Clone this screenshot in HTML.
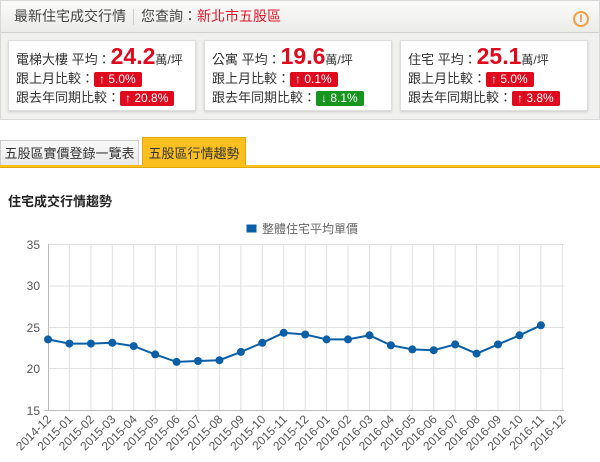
<!DOCTYPE html>
<html><head><meta charset="utf-8"><style>
*{box-sizing:border-box;margin:0;padding:0}
body{width:600px;height:462px;background:#fff;font-family:"Liberation Sans","Noto Sans CJK TC",sans-serif;position:relative;overflow:hidden;color:#333}
.top{position:absolute;left:0;top:0;width:600px;height:120px;border:1px solid #d8d8d8;background:#f0f0ee}
.hdr{height:32px;border-bottom:1px solid #d0d0d0;background:linear-gradient(#fbfbfa,#ebebe8);font-size:14px;line-height:31px;padding-left:13px;color:#444}
.hdr .sep{display:inline-block;width:1px;height:16px;background:#ccc;vertical-align:middle;margin:0 7px}
.hdr .red{color:#e0162b}
.warn{position:absolute;right:10px;top:10px;width:16px;height:16px;border:2px solid #f0a040;border-radius:50%;color:#f08020;font-size:11px;font-weight:bold;text-align:center;line-height:12px}
.card{position:absolute;top:40px;width:188px;height:71px;background:#fff;border:1px solid #ddd;box-shadow:0 1px 2px #ccc;padding:2px 0 0 7px;font-size:13px;color:#333}
.card .l1{height:26px;line-height:26px}
.big{color:#e00a1e;font-size:23px;font-weight:bold}
.u{font-size:12px}
.card .l{height:19px;line-height:19px}
.b{display:inline-block;background:#e00a1e;color:#fff;font-size:12px;line-height:15px;padding:0 6px 0 5px;border-radius:2px}
.g{background:#17951f}
.tab{position:absolute;top:140px;height:26px;font-size:13px;line-height:26px;text-align:center;border:1px solid #ccc;border-bottom:none;background:linear-gradient(#fafafa,#e8e8e8);color:#333}
.tab2{background:#fbc020;border-color:#e0a800;top:137px;height:29px;line-height:31px}
.line{position:absolute;left:0;top:165px;width:600px;height:3px;background:#fbc020;border-bottom:1px solid #e0a800}
h3{position:absolute;left:8px;top:191px;font-size:13px;font-weight:bold;color:#222}
svg{position:absolute;left:0;top:0}
</style></head><body>
<div class="top">
<div class="hdr">最新住宅成交行情<span class="sep"></span>您查詢：<span class="red">新北市五股區</span></div>
<div class="warn">!</div>
</div>
<div class="card" style="left:8px"><div class="l1">電梯大樓 平均：<span class="big">24.2</span><span class="u">萬/坪</span></div><div class="l">跟上月比較：<span class="b">↑ 5.0%</span></div><div class="l">跟去年同期比較：<span class="b">↑ 20.8%</span></div></div>
<div class="card" style="left:204px"><div class="l1">公寓 平均：<span class="big">19.6</span><span class="u">萬/坪</span></div><div class="l">跟上月比較：<span class="b">↑ 0.1%</span></div><div class="l">跟去年同期比較：<span class="b g">↓ 8.1%</span></div></div>
<div class="card" style="left:400px"><div class="l1">住宅 平均：<span class="big">25.1</span><span class="u">萬/坪</span></div><div class="l">跟上月比較：<span class="b">↑ 5.0%</span></div><div class="l">跟去年同期比較：<span class="b">↑ 3.8%</span></div></div>
<div class="tab" style="left:0;width:139px">五股區實價登錄一覽表</div>
<div class="tab tab2" style="left:142px;width:104px">五股區行情趨勢</div>
<div class="line"></div>
<h3>住宅成交行情趨勢</h3>
<svg width="600" height="462" font-family="Liberation Sans, Noto Sans CJK TC, sans-serif">
<rect x="246" y="224" width="11" height="9" fill="#0a5fa6" stroke="#fff"/>
<text x="262" y="233" font-size="12" fill="#666">整體住宅平均單價</text>
<g stroke="#e0e0e0" stroke-width="1">
<line x1="48" y1="244.5" x2="564" y2="244.5"/><line x1="48" y1="286" x2="564" y2="286"/><line x1="48" y1="327.5" x2="564" y2="327.5"/><line x1="48" y1="368.5" x2="564" y2="368.5"/>
<line x1="69.4" y1="244" x2="69.4" y2="410"/><line x1="90.9" y1="244" x2="90.9" y2="410"/><line x1="112.3" y1="244" x2="112.3" y2="410"/><line x1="133.7" y1="244" x2="133.7" y2="410"/><line x1="155.2" y1="244" x2="155.2" y2="410"/><line x1="176.6" y1="244" x2="176.6" y2="410"/><line x1="198" y1="244" x2="198" y2="410"/><line x1="219.4" y1="244" x2="219.4" y2="410"/><line x1="240.9" y1="244" x2="240.9" y2="410"/><line x1="262.3" y1="244" x2="262.3" y2="410"/><line x1="283.7" y1="244" x2="283.7" y2="410"/><line x1="305.2" y1="244" x2="305.2" y2="410"/><line x1="326.6" y1="244" x2="326.6" y2="410"/><line x1="348" y1="244" x2="348" y2="410"/><line x1="369.5" y1="244" x2="369.5" y2="410"/><line x1="390.9" y1="244" x2="390.9" y2="410"/><line x1="412.3" y1="244" x2="412.3" y2="410"/><line x1="433.7" y1="244" x2="433.7" y2="410"/><line x1="455.2" y1="244" x2="455.2" y2="410"/><line x1="476.6" y1="244" x2="476.6" y2="410"/><line x1="498" y1="244" x2="498" y2="410"/><line x1="519.5" y1="244" x2="519.5" y2="410"/><line x1="540.9" y1="244" x2="540.9" y2="410"/><line x1="562.3" y1="244" x2="562.3" y2="410"/>
</g>
<g stroke="#bbb"><line x1="48.5" y1="244" x2="48.5" y2="410"/><line x1="44" y1="410.5" x2="564" y2="410.5"/></g>
<g font-size="12" fill="#555" text-anchor="end"><text x="40" y="249">35</text><text x="40" y="290">30</text><text x="40" y="332">25</text><text x="40" y="373">20</text><text x="40" y="415">15</text></g>
<polyline fill="none" stroke="#0a5fa6" stroke-width="2" points="48,339.4 69.4,343.6 90.9,343.6 112.3,342.8 133.7,346.1 155.2,354.4 176.6,361.9 198,361 219.4,360.2 240.9,351.9 262.3,342.8 283.7,332.8 305.2,334.5 326.6,339.4 348,339.4 369.5,335.3 390.9,345.3 412.3,349.4 433.7,350.2 455.2,344.4 476.6,353.6 498,344.4 519.5,335.3 540.9,325.3"/>
<g fill="#0a5fa6"><circle cx="48" cy="339.4" r="4"/><circle cx="69.4" cy="343.6" r="4"/><circle cx="90.9" cy="343.6" r="4"/><circle cx="112.3" cy="342.8" r="4"/><circle cx="133.7" cy="346.1" r="4"/><circle cx="155.2" cy="354.4" r="4"/><circle cx="176.6" cy="361.9" r="4"/><circle cx="198" cy="361" r="4"/><circle cx="219.4" cy="360.2" r="4"/><circle cx="240.9" cy="351.9" r="4"/><circle cx="262.3" cy="342.8" r="4"/><circle cx="283.7" cy="332.8" r="4"/><circle cx="305.2" cy="334.5" r="4"/><circle cx="326.6" cy="339.4" r="4"/><circle cx="348" cy="339.4" r="4"/><circle cx="369.5" cy="335.3" r="4"/><circle cx="390.9" cy="345.3" r="4"/><circle cx="412.3" cy="349.4" r="4"/><circle cx="433.7" cy="350.2" r="4"/><circle cx="455.2" cy="344.4" r="4"/><circle cx="476.6" cy="353.6" r="4"/><circle cx="498" cy="344.4" r="4"/><circle cx="519.5" cy="335.3" r="4"/><circle cx="540.9" cy="325.3" r="4"/></g>
<g font-size="12" fill="#555" text-anchor="end">
<text transform="translate(52,420) rotate(-45)">2014-12</text>
<text transform="translate(73.4,420) rotate(-45)">2015-01</text>
<text transform="translate(94.9,420) rotate(-45)">2015-02</text>
<text transform="translate(116.3,420) rotate(-45)">2015-03</text>
<text transform="translate(137.7,420) rotate(-45)">2015-04</text>
<text transform="translate(159.2,420) rotate(-45)">2015-05</text>
<text transform="translate(180.6,420) rotate(-45)">2015-06</text>
<text transform="translate(202,420) rotate(-45)">2015-07</text>
<text transform="translate(223.4,420) rotate(-45)">2015-08</text>
<text transform="translate(244.9,420) rotate(-45)">2015-09</text>
<text transform="translate(266.3,420) rotate(-45)">2015-10</text>
<text transform="translate(287.7,420) rotate(-45)">2015-11</text>
<text transform="translate(309.2,420) rotate(-45)">2015-12</text>
<text transform="translate(330.6,420) rotate(-45)">2016-01</text>
<text transform="translate(352,420) rotate(-45)">2016-02</text>
<text transform="translate(373.5,420) rotate(-45)">2016-03</text>
<text transform="translate(394.9,420) rotate(-45)">2016-04</text>
<text transform="translate(416.3,420) rotate(-45)">2016-05</text>
<text transform="translate(437.7,420) rotate(-45)">2016-06</text>
<text transform="translate(459.2,420) rotate(-45)">2016-07</text>
<text transform="translate(480.6,420) rotate(-45)">2016-08</text>
<text transform="translate(502,420) rotate(-45)">2016-09</text>
<text transform="translate(523.5,420) rotate(-45)">2016-10</text>
<text transform="translate(544.9,420) rotate(-45)">2016-11</text>
<text transform="translate(566.3,420) rotate(-45)">2016-12</text>
</g>
</svg>
</body></html>
